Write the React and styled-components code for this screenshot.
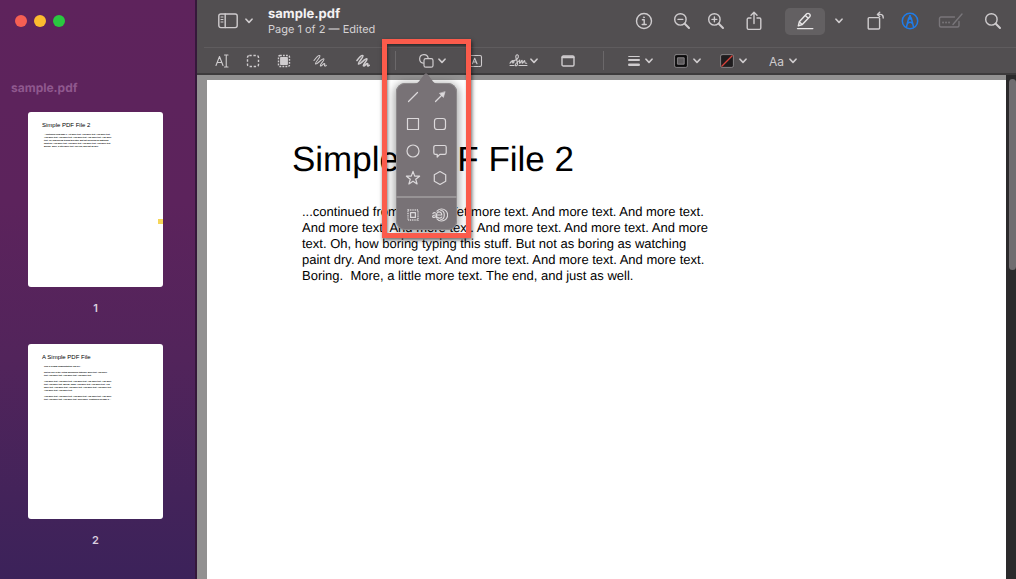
import React from 'react'
import styled, { createGlobalStyle } from 'styled-components'

const GlobalStyle = createGlobalStyle`
  :root {
    --uiFont: Inter, Roboto, sans-serif;
    --pageFont: 'Liberation Sans', Arial, sans-serif;
    --bar: #524f51;
    --icon: #cfccce;
    --accent: #1f7ce8;
  }
  * {
    box-sizing: border-box;
  }
  body {
    margin: 0;
    overflow: hidden;
    font-family: var(--uiFont);
    text-rendering: geometricPrecision;
  }
  button {
    padding: 0;
    border: 0;
    background: none;
    color: inherit;
    font: inherit;
  }
`
const Window = styled.div`
  display: grid;
  grid-template-columns: 197px 1fr;
  height: 100vh;
`

/* sidebar */
const Sidebar = styled.aside`
  display: flex;
  flex-direction: column;
  padding: 15px 4px 0 0;
  overflow: hidden;
  border-right: 2px solid #35183a;
  background: linear-gradient(#5e235c 0%, #5c235c 35%, #52245b 62%, #43235a 86%, #3c225a 100%);
`
const Lights = styled.div`
  display: flex;
  gap: 7px;
  padding-left: 15px;
`
const Light = styled.button`
  width: 12px;
  height: 12px;
  border-radius: 50%;
  background: ${props => props.$color};
`
const SidebarTitle = styled.h2`
  margin: 53px 0 16px 11px;
  font-size: 12px;
  font-weight: 700;
  line-height: 16px;
  color: #8f588e;
`
const Thumbs = styled.ol`
  display: flex;
  flex-direction: column;
  align-items: center;
  gap: 28px;
  margin: 0;
  padding: 0;
  list-style: none;
`
const Thumb = styled.button`
  display: flex;
  flex-direction: column;
  align-items: center;
  gap: 13px;
`
const Mini = styled.span`
  position: relative;
  display: block;
  width: 135px;
  height: 175px;
  padding: 9px 14px;
  border-radius: 3px;
  background: #fff;
  color: #000;
  font-family: var(--pageFont);
  text-align: left;
`
const MiniTitle = styled.span`
  display: block;
  font-size: 6px;
  line-height: 8px;
  margin-bottom: 4px;
`
const MiniText = styled.span`
  display: block;
  margin: 0 0 3px 2px;
  font-size: 2px;
  font-weight: 700;
  line-height: 3px;
  white-space: pre;
`
const Marker = styled.span`
  position: absolute;
  right: 0;
  top: 107px;
  width: 5px;
  height: 5px;
  background: #f6d659;
`
const PageNumber = styled.span`
  font-size: 11px;
  font-weight: 600;
  line-height: 16px;
  color: #dccfdf;
`

/* toolbars */
const Main = styled.main`
  display: flex;
  flex-direction: column;
  min-width: 0;
`
const Header = styled.header`
  position: relative;
  z-index: 1;
  background: var(--bar);
  border-bottom: 2px solid #3d3b3c;
  color: var(--icon);
`
const TitleBar = styled.div`
  display: flex;
  align-items: center;
  height: 47px;
  padding: 0 11px 5px 17px;
`
const TitleBlock = styled.div`
  flex: 1;
  padding: 1px 0 0 12px;
`
const Title = styled.h1`
  margin: 0;
  font-size: 13px;
  font-weight: 700;
  line-height: 15px;
  color: #f4f2f3;
`
const Subtitle = styled.p`
  margin: 0;
  font-size: 11px;
  line-height: 14px;
  color: #d6d3d5;
`
const MarkupBar = styled.div`
  display: flex;
  height: 26px;
  margin-left: 7px;
  padding-left: 3px;
  border-top: 1px solid #5f5c5e;
`
const Tool = styled.button`
  display: flex;
  align-items: center;
  justify-content: center;
  gap: ${props => props.$gap || 5}px;
  flex: none;
  width: ${props => props.$width}px;
  height: 26px;
  font-size: 12px;
  color: ${props => props.$color || 'var(--icon)'};
`
const ActiveTool = styled(Tool)`
  height: 27px;
  margin-left: 8px;
  border-radius: 5px;
  background: #636062;
  color: #e9e7e8;
`
const Separator = styled.span`
  display: flex;
  justify-content: center;
  flex: none;
  width: ${props => props.$width}px;
  padding: 3px 0;
  &::before {
    content: '';
    width: 1px;
    background: #6b686a;
  }
`
const Svg = styled.svg`
  display: block;
  flex: none;
  fill: none;
  stroke: currentColor;
  stroke-width: ${props => props.$stroke || 1.4};
  stroke-linecap: round;
  stroke-linejoin: round;
`

/* shapes menu */
const MenuAnchor = styled.div`
  position: relative;
`
const Popover = styled.div`
  position: absolute;
  left: -10px;
  top: 35px;
  width: 61px;
  padding: 0 4px 2px 3px;
  border-radius: 9px;
  background: #787276;
  box-shadow: inset 0 0 0 1px #8d898b, 0 2px 9px 2px rgba(0, 0, 0, 0.35);
`
const Arrow = styled(Svg)`
  position: absolute;
  left: 18px;
  top: -11px;
`
const ShapeGrid = styled.div`
  display: grid;
  grid-template-columns: 1fr 1fr;
`
const Shape = styled.button`
  display: flex;
  align-items: center;
  justify-content: center;
  height: 27px;
  color: #dcd9db;
`
const Divider = styled.hr`
  height: 2px;
  margin: 5px -4px 3px -3px;
  border: 0;
  background: #979395;
`
const Highlight = styled.div`
  position: absolute;
  left: -24px;
  top: -9px;
  width: 89px;
  height: 199px;
  border: 5px solid #fb5b4b;
  box-shadow: 1px 2px 4px rgba(0, 0, 0, 0.6), inset 1px 2px 3px rgba(0, 0, 0, 0.45);
  pointer-events: none;
`

/* document */
const Viewer = styled.div`
  display: grid;
  grid-template-columns: 1fr 10px;
  flex: 1;
  min-height: 0;
`
const Canvas = styled.div`
  display: flex;
  padding: 5px 0 0 10px;
  background: #929191;
  overflow: hidden;
`
const Page = styled.article`
  flex: 1;
  padding: 60px 85px;
  background: #fff;
  color: #000;
  font-family: var(--pageFont);
`
const PageTitle = styled.h2`
  margin: 0 0 24px;
  font-size: 35px;
  font-weight: 400;
  line-height: 40px;
  white-space: nowrap;
`
const PageText = styled.p`
  margin: 0 0 0 10px;
  font-size: 13px;
  line-height: 16px;
  white-space: pre;
`
const Track = styled.div`
  padding: 4px 0 0 3px;
  background: #2b2a2b;
`
const ScrollThumb = styled.div`
  height: 191px;
  border-radius: 4px;
  background: #706d70;
`

const Chevron = () => (
  <Svg width="8" height="6" viewBox="0 0 8 6" $stroke={1.6}>
    <path d="M1 1.2 4 4.4 7 1.2" />
  </Svg>
)

const Magnifier = ({ children }) => (
  <Svg width="18" height="18" viewBox="0 0 18 18">
    <circle cx="7.4" cy="7.4" r="5.7" />
    <path d="m11.8 11.8 4.2 4.2" strokeWidth="2" />
    {children}
  </Svg>
)

const Sketch = ({ bold }) => (
  <Svg width="14" height="14" viewBox="0 0 14 14" $stroke={bold ? 1.6 : 1.1}>
    <path d="M1 6.500C2.500 4.500 5.500 1 6.800 1.700 8.200 2.800 1.500 8.800 2.500 10 3.600 11.200 9.500 3.800 10.800 4.900 12 6 6.500 10.600 7.400 11.800 8.200 12.800 10.600 9 11.600 9.700c.7.500-.6 1.700.1 2.200.5.300 1.100-.1 1.600-.6" />
  </Svg>
)

const shapes = [
  { name: 'Line', art: <path d="M3.5 12.5 12.5 3.5" /> },
  {
    name: 'Arrow',
    art: (
      <>
        <path d="M3.5 12.5 10.5 5.5" />
        <path d="M13 3 11.4 8.4 7.6 4.6Z" fill="currentColor" strokeWidth=".6" />
      </>
    ),
  },
  { name: 'Rectangle', art: <rect x="2.5" y="2.5" width="11" height="11" /> },
  { name: 'Rounded rectangle', art: <rect x="2.5" y="2.5" width="11" height="11" rx="2.6" /> },
  { name: 'Oval', art: <circle cx="8" cy="8" r="6" /> },
  {
    name: 'Speech bubble',
    art: (
      <path d="M3.400 2.500h9.200a1.600 1.600 0 0 1 1.600 1.600v5.600a1.600 1.600 0 0 1-1.600 1.600H7.800L5.200 14v-2.700H3.400a1.600 1.600 0 0 1-1.600-1.600V4.100a1.600 1.600 0 0 1 1.600-1.600Z" />
    ),
  },
  {
    name: 'Star',
    art: <path d="m8 1.400 1.700 4.700 4.900.1-3.900 3 1.400 4.800L8 11.200 3.900 14l1.400-4.800-3.900-3 4.900-.1Z" />,
  },
  { name: 'Polygon', art: <path d="m8 1.600 5.700 3.200v6.400L8 14.400l-5.700-3.200V4.800Z" /> },
]

const effects = [
  {
    name: 'Mask',
    art: (
      <>
        <rect x="3" y="3" width="10" height="10" strokeWidth="1.8" strokeDasharray="1 .8" strokeLinecap="butt" opacity=".75" />
        <rect x="5.6" y="5.6" width="4.8" height="4.8" />
      </>
    ),
  },
  {
    name: 'Loupe',
    art: (
      <>
        <path d="M5 4.200A6 6 0 1 1 5 11.800" />
        <path d="M.9 6.500c1-1.300 3.600-1 3.600.9v3M4.500 8C2.500 7.900.6 8.200.6 9.400c0 1.500 2.700 1.300 3.900-.3" />
        <path d="M4.700 8h5.100M5.400 5.800C6.600 4.300 9.800 4.900 9.800 8M5.400 10.200c1 1.500 3.600 1.200 4.400-.2M8.800 3.500c4.600 0 4.600 9 0 9" />
      </>
    ),
  },
]

const ShapeButton = ({ name, art }) => (
  <Shape aria-label={name}>
    <Svg width="16" height="16" viewBox="0 0 16 16" $stroke={1.2}>
      {art}
    </Svg>
  </Shape>
)

const ShapesMenu = () => (
  <MenuAnchor>
    <Tool $width={52} $gap={4} aria-label="Shapes" aria-expanded="true">
      <Svg width="15" height="14" viewBox="0 0 15 14" $stroke={1.2}>
        <path d="M4.3 9.2A4.3 4.3 0 1 1 9.2 4.2" />
        <rect x="5" y="4.6" width="9" height="8.6" rx="1.8" />
      </Svg>
      <Chevron />
    </Tool>
    <Popover>
      <Arrow width="24" height="12" viewBox="0 0 24 12">
        <path
          d="M0 12C4 12 5.500 8.500 7 6.800L10.400 2.200Q12 .4 13.600 2.200L17 6.800C18.500 8.500 20 12 24 12Z"
          fill="#787276"
          stroke="none"
        />
      </Arrow>
      <ShapeGrid>
        {shapes.map(shape => (
          <ShapeButton key={shape.name} {...shape} />
        ))}
      </ShapeGrid>
      <Divider />
      <ShapeGrid>
        {effects.map(effect => (
          <ShapeButton key={effect.name} {...effect} />
        ))}
      </ShapeGrid>
    </Popover>
    <Highlight />
  </MenuAnchor>
)

const pageText = `...continued from page 1. Yet more text. And more text. And more text.
And more text. And more text. And more text. And more text. And more
text. Oh, how boring typing this stuff. But not as boring as watching
paint dry. And more text. And more text. And more text. And more text.
Boring.  More, a little more text. The end, and just as well.`

const firstPage = [
  'This is a small demonstration .pdf file -',
  `just for use in the Virtual Mechanics tutorials. More text. And more
text. And more text. And more text. And more text.`,
  `And more text. And more text. And more text. And more text. And more
text. And more text. Boring, zzzzz. And more text. And more text. And
more text. And more text. And more text. And more text. And more text.
And more text. And more text.`,
  `And more text. And more text. And more text. And more text. And more
text. And more text. And more text. Even more. Continued on page 2 ...`,
]

const thumbs = [
  { title: 'Simple PDF File 2', text: [pageText], marked: true },
  { title: 'A Simple PDF File', text: firstPage },
]

const PageSidebar = () => (
  <Sidebar>
    <Lights>
      <Light $color="#f65f53" aria-label="Close" />
      <Light $color="#fcbb2f" aria-label="Minimize" />
      <Light $color="#2ac840" aria-label="Zoom" />
    </Lights>
    <SidebarTitle>sample.pdf</SidebarTitle>
    <Thumbs>
      {thumbs.map((thumb, i) => (
        <li key={thumb.title}>
          <Thumb>
            <Mini>
              <MiniTitle>{thumb.title}</MiniTitle>
              {thumb.text.map(text => (
                <MiniText key={text}>{text}</MiniText>
              ))}
              {thumb.marked && <Marker />}
            </Mini>
            <PageNumber>{i + 1}</PageNumber>
          </Thumb>
        </li>
      ))}
    </Thumbs>
  </Sidebar>
)

const WindowToolbar = () => (
  <TitleBar>
    <Tool $width={42} $gap={7} aria-label="Sidebar view">
      <Svg width="20" height="16" viewBox="0 0 20 16">
        <rect x=".8" y="1" width="18.400" height="13.600" rx="2" />
        <path d="M7.200 1v13.600" />
        <path d="M3 4h2M3 6.500h2M3 9h2" strokeWidth="1" />
      </Svg>
      <Chevron />
    </Tool>
    <TitleBlock>
      <Title>sample.pdf</Title>
      <Subtitle>Page 1 of 2 — Edited</Subtitle>
    </TitleBlock>
    <Tool $width={38} aria-label="Info">
      <Svg width="18" height="18" viewBox="0 0 18 18">
        <circle cx="9" cy="9" r="7.500" />
        <path d="M7.400 7.800h1.800v4.600M7.200 12.500h4" />
        <circle cx="8.900" cy="5.300" r=".6" fill="currentColor" strokeWidth=".6" />
      </Svg>
    </Tool>
    <Tool $width={38} aria-label="Zoom out">
      <Magnifier>
        <path d="M5 7.400h4.800" />
      </Magnifier>
    </Tool>
    <Tool $width={30} aria-label="Zoom in">
      <Magnifier>
        <path d="M5 7.400h4.800M7.400 5v4.800" />
      </Magnifier>
    </Tool>
    <Tool $width={46} aria-label="Share">
      <Svg width="16" height="20" viewBox="0 0 16 20">
        <path d="M5 7H2.500A1.300 1.300 0 0 0 1.200 8.300v8.800a1.300 1.300 0 0 0 1.300 1.300h11a1.300 1.300 0 0 0 1.300-1.300V8.300A1.300 1.300 0 0 0 13.500 7H11M8 12.500V1.500M5 4.300 8 1.300l3 3" />
      </Svg>
    </Tool>
    <ActiveTool $width={40} aria-label="Highlight">
      <Svg width="18" height="18" viewBox="0 0 18 18">
        <path d="M2.300 13.800 3.300 9.800 10.700 1.800q1.400-1 2.800.2 1.300 1.300.2 2.700L6.300 12.500ZM9.300 3.400l3 2.900M3.400 9.900l2.800 2.500" />
        <path d="M1.500 16.600h15.300" />
      </Svg>
    </ActiveTool>
    <Tool $width={28} aria-label="Highlight colour">
      <Chevron />
    </Tool>
    <Tool $width={46} aria-label="Rotate">
      <Svg width="18" height="20" viewBox="0 0 18 20">
        <rect x="1.200" y="6.600" width="11.400" height="11.400" rx="1" />
        <path d="M10.800 3.400h2.400a3 3 0 0 1 3 3v.6M12.700 1.200l-2.300 2.200 2.300 2.200" />
      </Svg>
    </Tool>
    <Tool $width={22} $color="var(--accent)" aria-label="Markup">
      <Svg width="18" height="18" viewBox="0 0 18 18" $stroke={1.5}>
        <circle cx="9" cy="9" r="7.700" />
        <path d="M5.400 15.200 7.600 6.500 9 4.100l1.400 2.400 2.200 8.700M6.600 11.300Q9 9.300 11.400 11.300" />
        <path d="M9 4.100v3" strokeWidth="2" />
      </Svg>
    </Tool>
    <Tool $width={60} $color="#79767a" aria-label="Form filling">
      <Svg width="26" height="18" viewBox="0 0 26 18">
        <path d="M16.500 5H3a1.500 1.500 0 0 0-1.500 1.500v7A1.500 1.500 0 0 0 3 15h16.500a1.500 1.500 0 0 0 1.500-1.500V9.500M16 11.200 24 2M16 11.200l-1 1.300" />
        <path d="M5 10.500h.1M8 10.500h.1M11 10.500h.1" strokeWidth="1.800" />
      </Svg>
    </Tool>
    <Tool $width={24} aria-label="Search">
      <Magnifier />
    </Tool>
  </TitleBar>
)

const MarkupToolbar = () => (
  <MarkupBar>
    <Tool $width={30} aria-label="Text selection">
      <Svg width="14" height="14" viewBox="0 0 14 14" $stroke={1.1}>
        <path d="M1 11.500 4.500 2.500 8 11.500M2.200 8.500h4.600M9.500 1h3.500M11.250 1v12M9.500 13h3.500" />
      </Svg>
    </Tool>
    <Tool $width={32} aria-label="Rectangular selection">
      <Svg width="14" height="14" viewBox="0 0 14 14">
        <rect x="1.500" y="1.500" width="11" height="11" rx="1.800" strokeDasharray="2.400 1.700" strokeLinecap="butt" />
      </Svg>
    </Tool>
    <Tool $width={30} aria-label="Redact">
      <Svg width="14" height="14" viewBox="0 0 14 14">
        <rect x="1.500" y="1.500" width="11" height="11" rx="1.500" strokeDasharray="1.800 1.200" strokeLinecap="butt" />
        <rect x="3.800" y="3.800" width="6.400" height="6.400" fill="currentColor" />
      </Svg>
    </Tool>
    <Tool $width={42} aria-label="Sketch">
      <Sketch />
    </Tool>
    <Tool $width={44} aria-label="Draw">
      <Sketch bold />
    </Tool>
    <Separator $width={21} />
    <ShapesMenu />
    <Tool $width={34} aria-label="Text">
      <Svg width="16" height="14" viewBox="0 0 16 14" $stroke={1.1}>
        <rect x="1" y="1.500" width="13.500" height="11" rx="1.500" strokeDasharray="4 1" />
        <path d="M5.400 9.800 7.700 4.300 10 9.800M6.200 8h3" />
      </Svg>
    </Tool>
    <Tool $width={62} $gap={2} aria-label="Sign">
      <Svg width="19" height="16" viewBox="0 0 19 16" $stroke={1.1}>
        <path d="M1 10.300C2.500 7 5.300 6.800 5 8.800 4.700 10.400 2.600 10.300 3.200 9 4.200 7.400 8.300 7.500 9.300 4.300 9.900 1.400 7 .8 6.800 3.400c-.1 2.700 2.200 5.300 1.800 7.800-.4 2.300-2.900 2-2.300.4C7 9.600 9.500 9 10.700 7c.3 1.300-.7 3.300.2 3.300.9-.1 1.300-3 2.100-2.900.7.200-.3 2.900.5 2.900.9 0 1.300-2.800 2-2.700.7.200-.1 2.700 1.100 2.700h1.100" />
        <path d="M1 12.500h4M10 12.500h8" />
      </Svg>
      <Chevron />
    </Tool>
    <Tool $width={28} aria-label="Note">
      <Svg width="14" height="12" viewBox="0 0 14 12">
        <rect x="1" y="1" width="12" height="10" rx="1.300" />
        <path d="M1.500 2.200h11" strokeWidth="2" />
      </Svg>
    </Tool>
    <Separator $width={43} />
    <Tool $width={30} aria-label="Shape style">
      <Svg width="12" height="12" viewBox="0 0 12 12" strokeLinecap="butt">
        <path d="M.7 1.500h10.600" strokeWidth="1" />
        <path d="M.9 5h10.200" strokeWidth="1.800" />
        <path d="M1.300 9.700h9.400" strokeWidth="2.600" />
      </Svg>
      <Chevron />
    </Tool>
    <Tool $width={64} aria-label="Border color">
      <Svg width="14" height="14" viewBox="0 0 14 14">
        <rect x=".6" y=".6" width="12.800" height="12.800" rx="1.500" fill="#0c0b0c" stroke="#858284" strokeWidth="1" />
        <rect x="3.800" y="3.800" width="6.400" height="6.400" fill="#5b585a" stroke="#858284" strokeWidth="1" />
      </Svg>
      <Chevron />
    </Tool>
    <Tool $width={28} aria-label="Fill color">
      <Svg width="14" height="14" viewBox="0 0 14 14">
        <rect x=".6" y=".6" width="12.800" height="12.800" rx="1.500" fill="#1f1c1e" stroke="#858284" strokeWidth="1" />
        <path d="M2 12 12 2" stroke="#d8413a" />
      </Svg>
      <Chevron />
    </Tool>
    <Tool $width={72} aria-label="Text style">
      Aa
      <Chevron />
    </Tool>
  </MarkupBar>
)

const App = () => (
  <>
    <GlobalStyle />
    <Window>
      <PageSidebar />
      <Main>
        <Header>
          <WindowToolbar />
          <MarkupToolbar />
        </Header>
        <Viewer>
          <Canvas>
            <Page>
              <PageTitle>Simple PDF File 2</PageTitle>
              <PageText>{pageText}</PageText>
            </Page>
          </Canvas>
          <Track>
            <ScrollThumb />
          </Track>
        </Viewer>
      </Main>
    </Window>
  </>
)

export default App
